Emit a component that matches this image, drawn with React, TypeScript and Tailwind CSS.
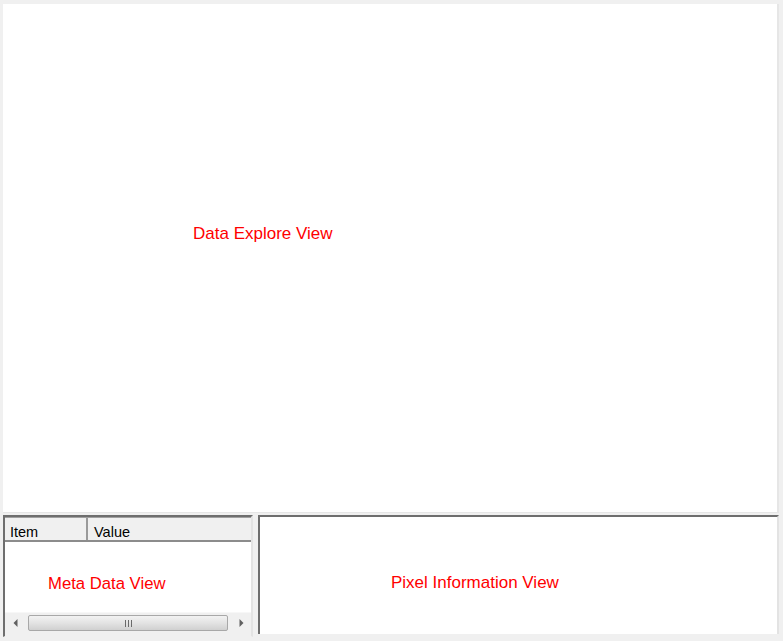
const sans = { fontFamily: '"Liberation Sans", Arial, sans-serif' };

function Arrow({ dir }: { dir: "left" | "right" }) {
  return (
    <div className="w-[20px] h-full flex items-center justify-center">
      <svg width="5" height="8" viewBox="0 0 5 8">
        {dir === "left" ? (
          <polygon points="4.5,0 4.5,8 0.5,4" fill="#606060" />
        ) : (
          <polygon points="0.5,0 0.5,8 4.5,4" fill="#606060" />
        )}
      </svg>
    </div>
  );
}

function HScrollBar() {
  return (
    <div className="h-[21px] flex items-stretch bg-[#f0f0f0] border-t border-[#f7f7f7]">
      <Arrow dir="left" />
      <div className="flex-1 my-[2px] mx-[3px] rounded-[2px] border border-[#a8a8a8] bg-gradient-to-b from-[#f2f2f2] via-[#e3e3e3] to-[#d0d0d0] flex items-center justify-center gap-[2px]">
        <div className="w-[1px] h-[7px] bg-[#6a6a6a]" />
        <div className="w-[1px] h-[7px] bg-[#6a6a6a]" />
        <div className="w-[1px] h-[7px] bg-[#6a6a6a]" />
      </div>
      <Arrow dir="right" />
    </div>
  );
}

export default function App() {
  return (
    <div
      className="w-[783px] h-[641px] bg-[#f0f0f0] pt-[4px] pl-[3px] pr-[4px] flex flex-col"
      style={sans}
    >
      <div className="h-[509px] bg-white border-r-2 border-b border-[#e6e6e6] pl-[190px] pt-[217px]">
        <span className="text-[17px] text-[#ff0000]">Data Explore View</span>
      </div>

      <div className="mt-[2px] h-[122px] flex gap-[5px]">
        <div className="w-[250px] flex flex-col border-t-2 border-l-2 border-t-[#6e6e6e] border-l-[#6e6e6e] border-r-2 border-r-[#e3e3e3] border-b border-b-[#f0f0f0]">
          <div className="h-[25px] flex bg-[#f0f0f0] border-t border-[#a0a0a0] border-b-2 border-b-[#8c8c8c] text-[14.5px] text-black leading-none">
            <div className="w-[83px] flex items-end pb-[1px] pl-[5px] border-r-2 border-[#9a9a9a]">Item</div>
            <div className="flex-1 flex items-end pb-[1px] pl-[6px]">Value</div>
          </div>
          <div className="flex-1 bg-white pl-[43px] pt-[29px]">
            <span className="text-[16.7px] text-[#ff0000]">Meta Data View</span>
          </div>
          <HScrollBar />
          <div className="h-[3px] bg-[#f0f0f0]" />
        </div>

        <div className="flex-1 bg-white border-t-2 border-l-2 border-t-[#6e6e6e] border-l-[#6e6e6e] border-r-2 border-r-[#e3e3e3] pl-[131px] pt-[53px] mb-[3px]">
          <span className="text-[17px] text-[#ff0000]">Pixel Information View</span>
        </div>
      </div>
    </div>
  );
}
